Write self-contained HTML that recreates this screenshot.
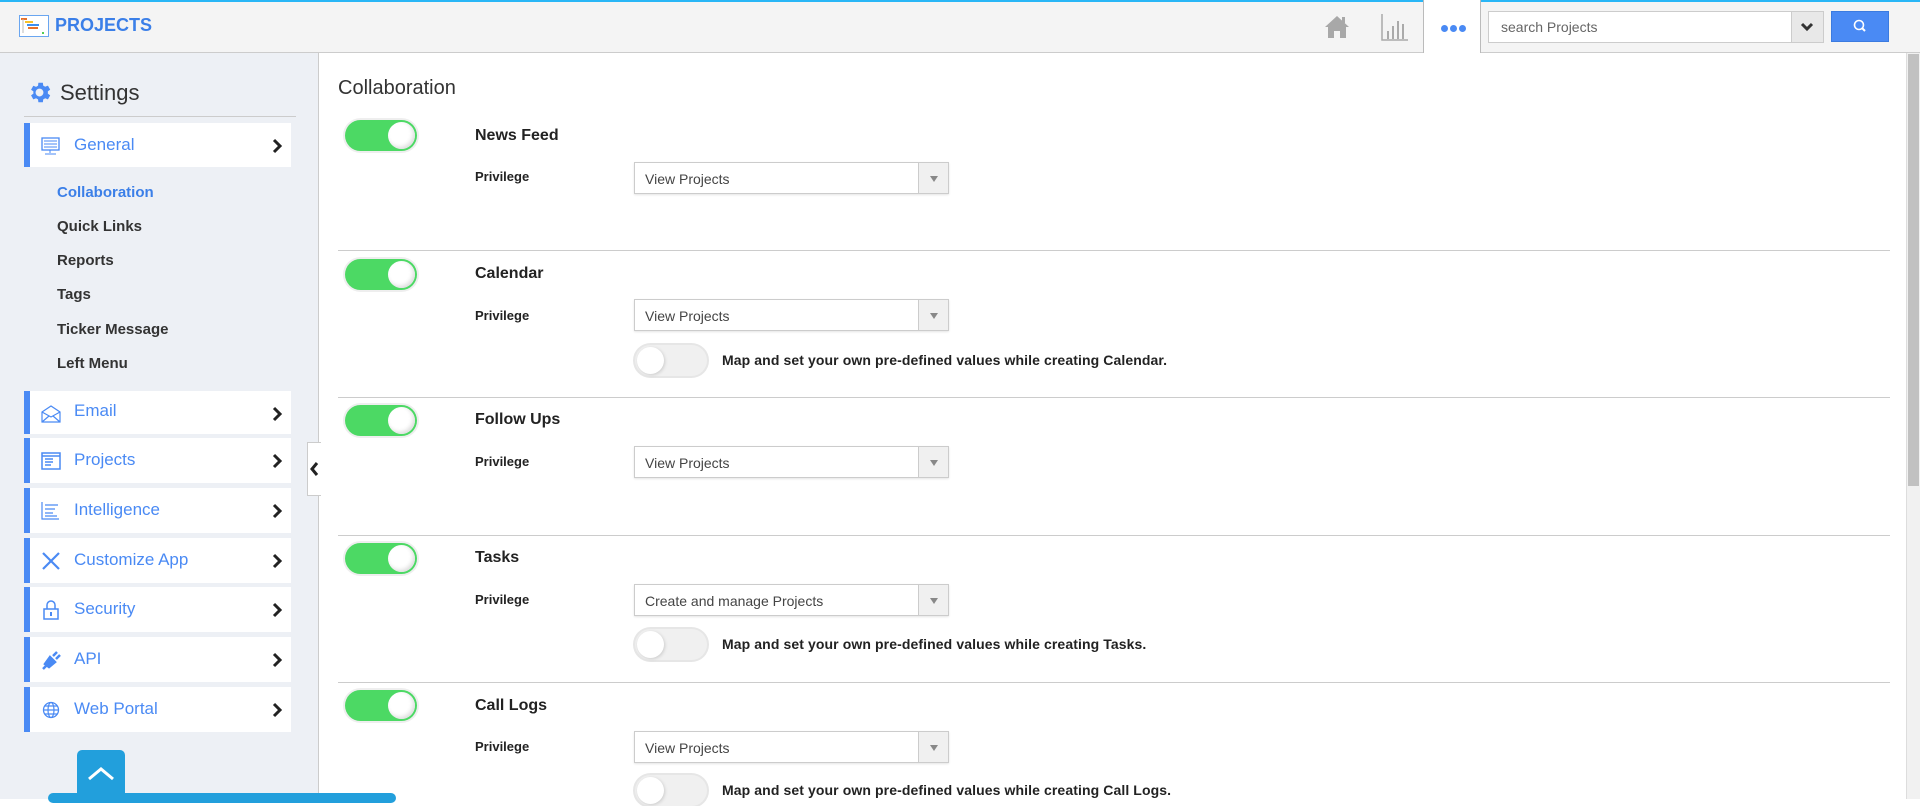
<!DOCTYPE html>
<html><head><meta charset="utf-8"><style>
*{box-sizing:border-box;margin:0;padding:0}
body{width:1920px;height:799px;overflow:hidden;background:#fff;font-family:"Liberation Sans",Arial,sans-serif;position:relative;color:#333}
.a{position:absolute}
#hdr{left:0;top:0;width:1920px;height:53px;background:#f4f4f4;border-top:2px solid #29b6f6;border-bottom:1px solid #ccc}
#side{left:0;top:53px;width:319px;height:746px;background:#edf0f5;border-right:1px solid #ccc}
.mi{position:absolute;left:24px;width:267px;height:45px;background:#fff;border-left:6px solid #4a8af4}
.mi span{position:absolute;left:44px;top:12px;font-size:17px;color:#4a8af4}
.mi svg.ic{position:absolute;left:11px;top:13px}
.chev{position:absolute;right:8px;top:15px}
.sub{position:absolute;left:57px;font-size:15px;font-weight:bold;color:#333}
.tg{position:absolute;left:345px;width:72px;height:31px;border-radius:16px;background:#4cd964;box-shadow:0 0 0 2px #eee}
.tg::after{content:"";position:absolute;right:2px;top:2px;width:27px;height:27px;border-radius:50%;background:#fff;box-shadow:inset -2px -2px 4px #ddd}
.to{position:absolute;left:635px;width:72px;height:31px;border-radius:16px;background:#f0f0f0;box-shadow:0 0 0 2px #e6e6e6}
.to::after{content:"";position:absolute;left:2px;top:2px;width:27px;height:27px;border-radius:50%;background:#fff;box-shadow:1px 1px 3px #ccc}
.tt{position:absolute;left:475px;font-size:16px;font-weight:bold;color:#222}
.pv{position:absolute;left:475px;font-size:13px;font-weight:bold;color:#222}
.sel{position:absolute;left:634px;width:315px;height:32px;border:1px solid #ccc;background:#fff;font-size:14px;color:#444;padding:8px 10px;box-shadow:0 1px 2px #e5e5e5}
.sel::after{content:"";position:absolute;right:0;top:0;width:29px;height:30px;background:#f0f0f0;border-left:1px solid #ccc}
.sel i{position:absolute;right:10px;top:13px;width:0;height:0;border-left:4px solid transparent;border-right:4px solid transparent;border-top:6px solid #888;z-index:2}
.mp{position:absolute;left:722px;font-size:14px;font-weight:bold;color:#222;letter-spacing:0.1px}
.sep{position:absolute;left:338px;width:1552px;height:1px;background:#ccc}
</style></head><body>
<div id="hdr" class="a">
 <svg class="a" style="left:19px;top:13px" width="30" height="22" viewBox="0 0 30 22"><rect x="0.5" y="0.5" width="29" height="21" fill="#fff" stroke="#6aa6f0"/><rect x="2" y="3" width="6" height="2" fill="#e8702a"/><rect x="6" y="6" width="8" height="2" fill="#f6c12c"/><rect x="8" y="9" width="12" height="2" fill="#3c8ef0"/><rect x="9" y="12" width="10" height="2" fill="#e8702a"/><line x1="4" y1="4" x2="4" y2="18" stroke="#bbb"/><rect x="23" y="17" width="2" height="2" fill="#5c5"/></svg>
 <div class="a" style="left:55px;top:13px;font-size:18px;font-weight:bold;color:#3b7fe8">PROJECTS</div>
 <svg class="a" style="left:1324px;top:13px" width="26" height="24" viewBox="0 0 26 24"><path d="M13 1 L1 12 L4 12 L4 23 L10 23 L10 16 L16 16 L16 23 L22 23 L22 12 L25 12 Z" fill="#a8a8a8"/><rect x="18" y="2" width="3" height="6" fill="#a8a8a8"/></svg>
 <svg class="a" style="left:1381px;top:12px" width="27" height="27" viewBox="0 0 27 27"><path d="M1 0V26H27" stroke="#aaa" stroke-width="1.5" fill="none"/><rect x="6" y="17" width="2" height="8" fill="#aaa"/><rect x="11" y="12" width="2" height="13" fill="#aaa"/><rect x="16" y="7" width="2" height="18" fill="#aaa"/><rect x="21" y="10" width="2" height="15" fill="#aaa"/></svg>
 <div class="a" style="left:1423px;top:-2px;width:58px;height:53px;background:#fff;border-left:1px solid #bbb;border-right:1px solid #bbb"></div>
 <div class="a" style="left:1441px;top:23px;width:7px;height:7px;border-radius:50%;background:#4a8af4"></div>
 <div class="a" style="left:1450px;top:23px;width:7px;height:7px;border-radius:50%;background:#4a8af4"></div>
 <div class="a" style="left:1459px;top:23px;width:7px;height:7px;border-radius:50%;background:#4a8af4"></div>
 <div class="a" style="left:1488px;top:9px;width:336px;height:32px;background:#fff;border:1px solid #ccc;font-size:14px;color:#666;padding:7px 12px">search Projects</div>
 <div class="a" style="left:1791px;top:9px;width:33px;height:32px;background:#e8e8e8;border:1px solid #ccc"></div>
 <svg class="a" style="left:1800px;top:19px" width="14" height="12" viewBox="0 0 14 12"><path d="M2 3 L7 8 L12 3" stroke="#333" stroke-width="3" fill="none"/></svg>
 <div class="a" style="left:1831px;top:9px;width:58px;height:31px;background:#4a8af4;border:1px solid #3b7be0"></div>
 <svg class="a" style="left:1852px;top:16px" width="16" height="16" viewBox="0 0 16 16"><circle cx="7" cy="7" r="4.5" stroke="#fff" stroke-width="1.6" fill="none"/><path d="M10 10 L13 13" stroke="#fff" stroke-width="2"/></svg>
</div>
<div id="side" class="a"></div>
<svg class="a" style="left:26px;top:79px" width="27" height="27" viewBox="0 0 24 24"><path fill="#4a8af4" d="M19.4 13a7.5 7.5 0 0 0 0-2l2.1-1.6-2-3.5-2.5 1a7 7 0 0 0-1.7-1L15 3.3h-4L10.7 6a7 7 0 0 0-1.7 1l-2.5-1-2 3.5L6.6 11a7.5 7.5 0 0 0 0 2l-2.1 1.6 2 3.5 2.5-1a7 7 0 0 0 1.7 1l.3 2.6h4l.3-2.6a7 7 0 0 0 1.7-1l2.5 1 2-3.5zM12 15.5A3.5 3.5 0 1 1 12 8.5a3.5 3.5 0 0 1 0 7z"/></svg>
<div class="a" style="left:60px;top:80px;font-size:22px;color:#333">Settings</div>
<div class="a" style="left:24px;top:116px;width:272px;height:1px;background:#ccc"></div>
<div class="mi" style="top:123px;height:44px"><svg class="ic" width="20" height="20" viewBox="0 0 20 20"><rect x="1" y="2" width="17" height="12" fill="none" stroke="#4a8af4" stroke-width="1.3"/><path d="M3 5h13M3 8h13M3 11h13M9 14v3M4 18h11" stroke="#4a8af4"/></svg><span>General</span><svg class="chev" width="12" height="16" viewBox="0 0 12 16"><path d="M3 2 L9 8 L3 14" stroke="#222" stroke-width="3" fill="none"/></svg></div>
<div class="sub" style="top:184px;color:#3b7fe8">Collaboration</div>
<div class="sub" style="top:218px">Quick Links</div>
<div class="sub" style="top:252px">Reports</div>
<div class="sub" style="top:286px">Tags</div>
<div class="sub" style="top:321px">Ticker Message</div>
<div class="sub" style="top:355px">Left Menu</div>
<div class="mi" style="top:391px;height:43px"><svg class="ic" width="20" height="20" viewBox="0 0 20 20"><path d="M1 8 L10 2 L19 8 V18 H1 Z M1 8 L10 13 L19 8 M1 18 L8 12 M19 18 L12 12" fill="none" stroke="#4a8af4" stroke-width="1.2"/></svg><span style="top:10px">Email</span><svg class="chev" width="12" height="16" viewBox="0 0 12 16"><path d="M3 2 L9 8 L3 14" stroke="#222" stroke-width="3" fill="none"/></svg></div>
<div class="mi" style="top:438px"><svg class="ic" width="20" height="20" viewBox="0 0 20 20"><rect x="1" y="2" width="18" height="16" fill="none" stroke="#4a8af4" stroke-width="1.5"/><path d="M1 5h18M4 8h8M4 11h8M4 14h6" stroke="#4a8af4" stroke-width="1.5"/></svg><span>Projects</span><svg class="chev" width="12" height="16" viewBox="0 0 12 16"><path d="M3 2 L9 8 L3 14" stroke="#222" stroke-width="3" fill="none"/></svg></div>
<div class="mi" style="top:488px"><svg class="ic" width="20" height="20" viewBox="0 0 20 20"><path d="M1 1V18H18M4 4h13M4 8h10M4 12h8M4 15h12" stroke="#4a8af4" stroke-width="1.2" fill="none"/></svg><span>Intelligence</span><svg class="chev" width="12" height="16" viewBox="0 0 12 16"><path d="M3 2 L9 8 L3 14" stroke="#222" stroke-width="3" fill="none"/></svg></div>
<div class="mi" style="top:538px"><svg class="ic" width="20" height="20" viewBox="0 0 20 20"><path d="M2 2 L18 18 M18 2 L2 18" stroke="#4a8af4" stroke-width="2.2"/></svg><span>Customize App</span><svg class="chev" width="12" height="16" viewBox="0 0 12 16"><path d="M3 2 L9 8 L3 14" stroke="#222" stroke-width="3" fill="none"/></svg></div>
<div class="mi" style="top:587px"><svg class="ic" width="20" height="20" viewBox="0 0 20 20"><path d="M6 9V5a4 4 0 0 1 8 0v4" stroke="#4a8af4" stroke-width="1.5" fill="none"/><rect x="3" y="9" width="14" height="10" fill="none" stroke="#4a8af4" stroke-width="1.5"/><rect x="9" y="12" width="2" height="4" fill="#4a8af4"/></svg><span>Security</span><svg class="chev" width="12" height="16" viewBox="0 0 12 16"><path d="M3 2 L9 8 L3 14" stroke="#222" stroke-width="3" fill="none"/></svg></div>
<div class="mi" style="top:637px"><svg class="ic" width="20" height="20" viewBox="0 0 20 20"><path d="M4 14 L9 7 L14 12 L8 17 Z M2 19 L6 15 M12 6 L16 2 M15 9 L19 5" stroke="#4a8af4" stroke-width="2.5" fill="#4a8af4"/></svg><span>API</span><svg class="chev" width="12" height="16" viewBox="0 0 12 16"><path d="M3 2 L9 8 L3 14" stroke="#222" stroke-width="3" fill="none"/></svg></div>
<div class="mi" style="top:687px"><svg class="ic" width="20" height="20" viewBox="0 0 20 20"><circle cx="10" cy="10" r="7.5" fill="none" stroke="#4a8af4" stroke-width="1.3"/><ellipse cx="10" cy="10" rx="3" ry="7.5" fill="none" stroke="#4a8af4" stroke-width="1.2"/><path d="M2.5 10h15M4 6h12M4 14h12" stroke="#4a8af4" stroke-width="1.2"/></svg><span>Web Portal</span><svg class="chev" width="12" height="16" viewBox="0 0 12 16"><path d="M3 2 L9 8 L3 14" stroke="#222" stroke-width="3" fill="none"/></svg></div>
<div class="a" style="left:77px;top:750px;width:48px;height:49px;background:#229fdc;border-radius:5px 5px 0 0"></div>
<svg class="a" style="left:86px;top:766px" width="30" height="16" viewBox="0 0 30 16"><path d="M3 13 L15 3 L27 13" stroke="#fff" stroke-width="3" fill="none"/></svg>
<div class="a" style="left:48px;top:793px;width:348px;height:10px;background:#229fdc;border-radius:5px"></div>
<div class="a" style="left:307px;top:442px;width:14px;height:54px;background:#fff;border:1px solid #ccc;border-right:none"></div>
<svg class="a" style="left:309px;top:461px" width="10" height="16" viewBox="0 0 10 16"><path d="M8 2 L3 8 L8 14" stroke="#222" stroke-width="3" fill="none"/></svg>
<div class="a" style="left:338px;top:77px;font-size:20px;color:#333">Collaboration</div>

<div class="tg" style="top:120px"></div>
<div class="tt" style="top:127px">News Feed</div>
<div class="pv" style="top:169px">Privilege</div>
<div class="sel" style="top:162px">View Projects<i></i></div>
<div class="sep" style="top:250px"></div>

<div class="tg" style="top:259px"></div>
<div class="tt" style="top:265px">Calendar</div>
<div class="pv" style="top:308px">Privilege</div>
<div class="sel" style="top:299px">View Projects<i></i></div>
<div class="to" style="top:345px"></div>
<div class="mp" style="top:352px">Map and set your own pre-defined values while creating Calendar.</div>
<div class="sep" style="top:397px"></div>

<div class="tg" style="top:405px"></div>
<div class="tt" style="top:411px">Follow Ups</div>
<div class="pv" style="top:454px">Privilege</div>
<div class="sel" style="top:446px">View Projects<i></i></div>
<div class="sep" style="top:535px"></div>

<div class="tg" style="top:543px"></div>
<div class="tt" style="top:549px">Tasks</div>
<div class="pv" style="top:592px">Privilege</div>
<div class="sel" style="top:584px">Create and manage Projects<i></i></div>
<div class="to" style="top:629px"></div>
<div class="mp" style="top:636px">Map and set your own pre-defined values while creating Tasks.</div>
<div class="sep" style="top:682px"></div>

<div class="tg" style="top:690px"></div>
<div class="tt" style="top:697px">Call Logs</div>
<div class="pv" style="top:739px">Privilege</div>
<div class="sel" style="top:731px">View Projects<i></i></div>
<div class="to" style="top:775px"></div>
<div class="mp" style="top:782px">Map and set your own pre-defined values while creating Call Logs.</div>

<div class="a" style="left:1906px;top:53px;width:14px;height:746px;background:#f1f1f1;border-left:1px solid #ddd"></div>
<div class="a" style="left:1908px;top:54px;width:11px;height:432px;background:#c1c1c1"></div>
</body></html>
